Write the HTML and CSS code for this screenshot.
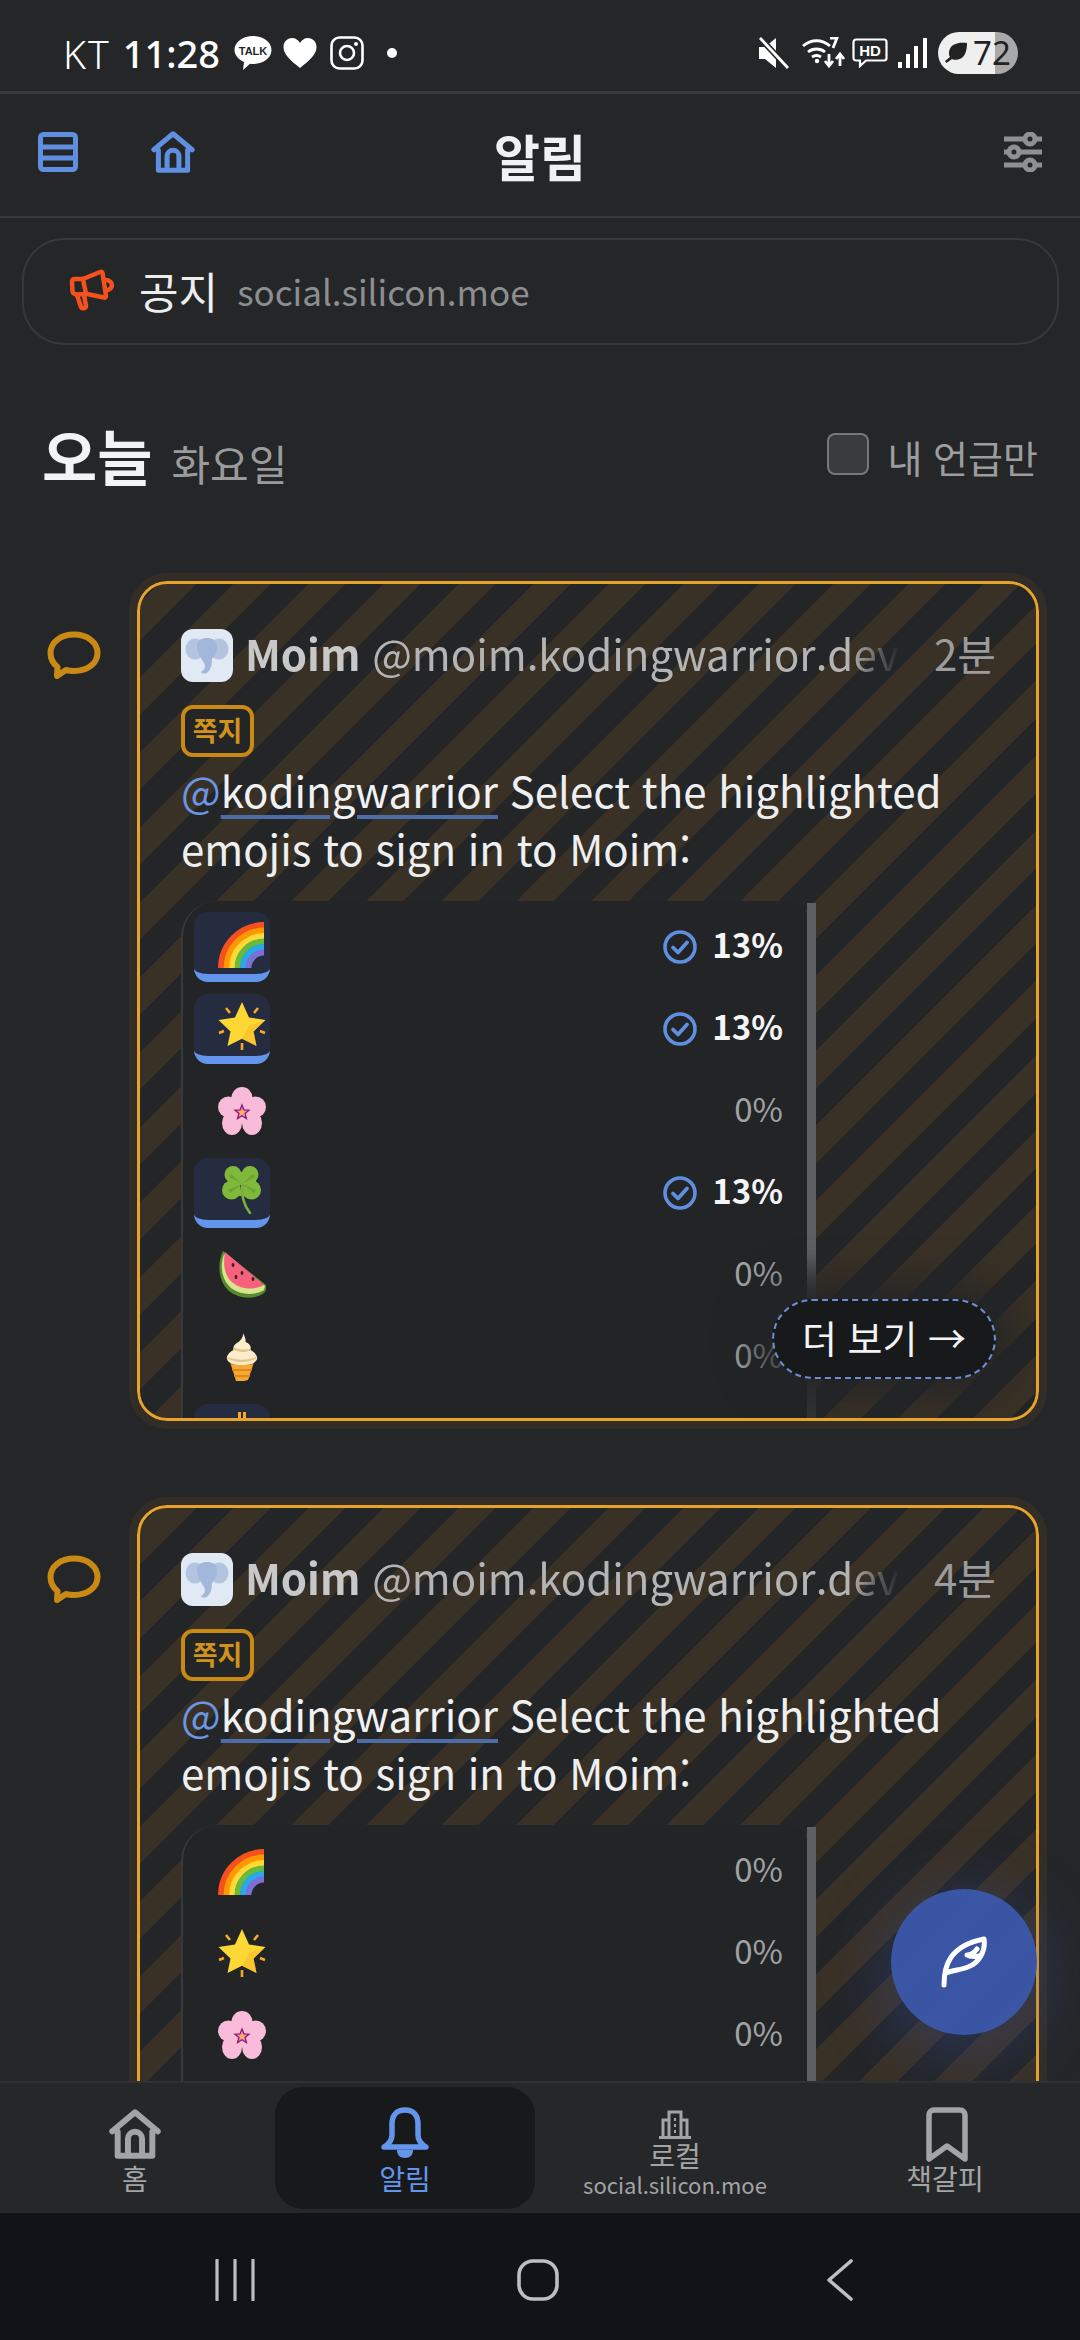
FILE: index.html
```html
<!DOCTYPE html>
<html lang="ko">
<head>
<meta charset="utf-8">
<title>알림</title>
<link rel="stylesheet" href="styles.css">
</head>
<body>
<svg class="defs" width="0" height="0" aria-hidden="true">
  <defs>
    <clipPath id="rb"><rect x="0" y="0" width="46" height="48"/></clipPath>
    <symbol id="e-rainbow" viewBox="0 0 48 48">
      <g fill="none" stroke-width="5.900" clip-path="url(#rb)">
        <path stroke="#f4511e" d="M3 48A43 43 0 0 1 46 5"/>
        <path stroke="#ff9800" d="M8.500 48A37.500 37.500 0 0 1 46 10.500"/>
        <path stroke="#ffd835" d="M14 48A32 32 0 0 1 46 16"/>
        <path stroke="#66bb3a" d="M19.500 48A26.500 26.500 0 0 1 46 21.500"/>
        <path stroke="#29a9e8" d="M25 48A21 21 0 0 1 46 27"/>
        <path stroke="#7e6fd6" d="M30.500 48A15.500 15.500 0 0 1 46 32.500"/>
      </g>
    </symbol>
    <symbol id="e-star" viewBox="0 0 48 48">
      <path fill="#fdd835" d="M24 0l7 15.600 16.500 2.400-12 11.600L38.500 44 24 36.800 9.500 44l3-14.400L.5 18l16.500-2.400z"/>
      <path fill="#f9b628" d="M24 36.800L38.500 44l-3-14.400 12-11.600L31 24z" opacity=".55"/>
      <g stroke="#f9a825" stroke-width="2.600" fill="none"><path d="M8 6l4 5M40 6l-4 5M1 31l5-2M47 31l-5-2M24 41v7"/></g>
    </symbol>
    <symbol id="e-flower" viewBox="0 0 48 48">
      <g fill="#f8bbd9">
        <ellipse cx="24" cy="11" rx="10.500" ry="11"/>
        <ellipse cx="10.500" cy="20" rx="10.500" ry="10.500"/>
        <ellipse cx="37.500" cy="20" rx="10.500" ry="10.500"/>
        <ellipse cx="14" cy="36" rx="10" ry="12"/>
        <ellipse cx="34" cy="36" rx="10" ry="12"/>
        <circle cx="24" cy="25" r="11"/>
      </g>
      <path fill="#f48fb1" stroke="#8e1a6b" stroke-width="1.300" d="M24 18l1.900 4.800 5.100.4-3.900 3.300 1.300 5-4.400-2.700-4.400 2.700 1.300-5-3.900-3.300 5.100-.4z"/>
      <circle cx="24" cy="25.500" r="2.200" fill="#ffb74d"/>
    </symbol>
    <symbol id="e-clover" viewBox="0 0 48 48">
      <g fill="#7fb93a">
        <circle cx="15" cy="8.500" r="8.500"/><circle cx="32" cy="8.500" r="8.500"/>
        <circle cx="13.500" cy="24" r="9.500"/><circle cx="33.500" cy="24" r="9.500"/>
        <path d="M24 18L8 6h32zM24 18L7 30h34zM10 8h28v16H10z"/>
      </g>
      <g fill="#5d9130" opacity=".55"><path d="M24 18L13 8l-2 3zM24 18l11-10 2 3zM24 18L12 27l-2-3zM24 18l12 9 2-3z"/></g>
      <path fill="none" stroke="#7cae3c" stroke-width="2.600" stroke-linecap="round" d="M24 18c0 12 1 20 8 29"/>
    </symbol>
    <symbol id="e-melon" viewBox="0 0 48 48">
      <path fill="#558b2f" d="M5 0C-1 12 0 30 11 40c10 8 26 9 35 2 3-3 2-6 2-8z"/>
      <path fill="#d8e58c" d="M6 3C2 14 3 28 13 37c9 7 24 8 33 2l1-4z"/>
      <path fill="#f8617e" d="M7 1C5 13 6 25 15 32c9 7 22 7 31 2z"/>
      <g fill="#30241f"><ellipse cx="15" cy="14" rx="1.400" ry="2"/><ellipse cx="24" cy="22" rx="1.400" ry="2"/><ellipse cx="35" cy="28" rx="1.400" ry="2"/><ellipse cx="18" cy="26" rx="1.400" ry="2"/></g>
    </symbol>
    <symbol id="e-icecream" viewBox="0 0 48 48">
      <path fill="#f7a533" d="M11 26h26l-6.500 20c-.5 2-6.500 2-7 2h-5c-.5 0-1 0-1-2z"/>
      <path fill="#d98a1e" d="M12.500 30h23l-.6 2H13.100zM14 36h20l-.6 2H14.600zM15.800 42h16.400l-.6 2H16.400z"/>
      <path fill="#fbeccb" d="M25 0c2 4 3 6 2.500 9 4 1.500 6 4 5 8 4 2 7.500 6 6.500 9-1 4-7 6-15 6s-14-2-15-6c-1-3 2.500-7 6.500-9-1-3.500 1.500-6.500 5-8 2.500-2 5-5 4.500-9z"/>
      <path fill="#e4c48a" d="M16 14c5 3 11 3 16 2l.5 1.500c-5 2-12 2-17-1zM10 24c8 3.500 20 3.500 28 0l.5 1.500c-8 4.500-21 4.500-29 0z"/>
    </symbol>
    <symbol id="i-check" viewBox="0 0 34 36">
      <circle cx="17" cy="18" r="15" fill="none" stroke="#5f8fe0" stroke-width="3.600"/>
      <path d="M10 18.500l5 5 9-10" fill="none" stroke="#5f8fe0" stroke-width="3.800" stroke-linecap="round" stroke-linejoin="round"/>
    </symbol>
    <symbol id="i-elephant" viewBox="0 0 52 52">
      <g fill="#b3c4e0">
        <ellipse cx="14" cy="20" rx="9.500" ry="10.500"/>
        <ellipse cx="38" cy="20" rx="9.500" ry="10.500"/>
      </g>
      <path fill="#a3b7da" d="M16 17c0-6 5-8 10-8s10 2 10 8-2 10-5 13c0 5-1 10-4 13-3 2-6 2-7 0 2-1 4-3 4-6 0-3-3-5-4-8-2-3-4-7-4-12z"/>
    </symbol>
    <symbol id="i-bubble" viewBox="0 0 54 48">
      <path fill="none" stroke="currentColor" stroke-width="6" stroke-linejoin="round" d="M27 3.500c13.500 0 23.500 8 23.500 18.500S40.500 40 27 40c-3 0-5.500-.3-8-1l-9 6 .5-9C6 32.500 3.500 27.500 3.500 22 3.500 11.500 13.500 3.500 27 3.500z"/>
    </symbol>
    <symbol id="i-home" viewBox="0 0 48 46">
      <path fill="none" stroke="currentColor" stroke-width="5.500" stroke-linecap="round" stroke-linejoin="round" d="M3 20.500L24 3l21 17.500M8 21v22h32V21M17.500 43V27.500a6.500 6.500 0 0 1 13 0V43"/>
    </symbol>
    <symbol id="e-sun" viewBox="0 0 48 48">
      <circle cx="24" cy="24" r="14" fill="#fbc02d"/><path fill="#f9a825" d="M20 0h3v10h-3zM25 0h3v10h-3z"/>
    </symbol>
  </defs>
</svg>

<div class="phone">
  <div class="status">
    <div class="status-left">
      <span class="carrier">KT</span><span class="clock">11:28</span>
      <svg class="st-talk" viewBox="0 0 38 36"><path fill="#fff" d="M19 1c10 0 18.500 6 18.500 14S29 29 19 29c-1 0-2 0-3-.2L9 35l1-8C4.500 24.500.500 20 .500 15 .500 7 9 1 19 1z"/><text class="talk-text" x="19" y="19.500" text-anchor="middle">TALK</text></svg>
      <svg class="st-heart" viewBox="0 0 34 32"><path fill="#fff" d="M17 31C7 23 .5 17.500.5 10 .5 4.500 4.500 1 9 1c3.500 0 6.500 2 8 5 1.500-3 4.500-5 8-5 4.500 0 8.500 3.500 8.500 9 0 7.500-6.500 13-16.500 21z"/></svg>
      <svg class="st-insta" viewBox="0 0 34 34"><rect x="1.500" y="1.500" width="31" height="31" rx="8" fill="none" stroke="#fff" stroke-width="2.600"/><circle cx="17" cy="17" r="7" fill="none" stroke="#fff" stroke-width="2.600"/><circle cx="26" cy="8" r="2" fill="#fff"/></svg>
      <span class="st-dot"></span>
    </div>
    <div class="status-right">
      <svg class="st-mute" viewBox="0 0 32 32"><path fill="#fff" d="M1 10h6L18 1v30L7 22H1z"/><path d="M3 2l27 29" stroke="#252628" stroke-width="6"/><path d="M2 1l28 30" stroke="#fff" stroke-width="2.800"/></svg>
      <svg class="st-wifi" viewBox="0 0 44 32"><g fill="none" stroke="#fff" stroke-width="2.800"><path d="M1 9c8-7 19-7 27 0M6 15c5-4 12-4 17 0M10 20c3-2 6-2 9 0"/><path d="M28 1h7l-4 10M27 17v11M23 24l4 5 4-5M38 29V18M34 22l4-5 4 5"/></g><circle cx="15" cy="24" r="2.200" fill="#fff"/></svg>
      <svg class="st-hd" viewBox="0 0 36 30"><path fill="none" stroke="#fff" stroke-width="2.200" d="M4 1.500h28a2.500 2.500 0 0 1 2.500 2.500v16a2.500 2.500 0 0 1-2.500 2.500H14L8 28v-5.500H4A2.500 2.500 0 0 1 1.500 20V4A2.500 2.500 0 0 1 4 1.500z"/><text class="hd-text" x="18" y="18" text-anchor="middle">HD</text></svg>
      <svg class="st-signal" viewBox="0 0 29 30"><path fill="#fff" d="M0 24h4v6H0zM8 16h4v14H8zM16 8h4v22h-4zM25 0h4v30h-4z"/></svg>
      <div class="battery">
        <svg class="st-leaf" viewBox="0 0 24 22"><path fill="#222" d="M23 1c-9-1-17 1-18 9-.2 2 .2 4 1 5l-5 4 1.500 2L8 17c2 1 4 1 6 .5C21 16 23 9 23 1z"/></svg>
        <span class="batt-num">72</span>
      </div>
    </div>
  </div>

  <header class="top">
    <div class="top-left">
      <svg class="ic-list" viewBox="0 0 40 40"><rect x="2.500" y="2.500" width="35" height="35" rx="3" fill="none" stroke="currentColor" stroke-width="5"/><path d="M2 15h36M2 26h36" stroke="currentColor" stroke-width="5"/></svg>
      <svg class="ic-home-top"><use href="#i-home"/></svg>
    </div>
    <h1 class="top-title">알림</h1>
    <div class="top-right">
      <svg class="ic-slider" viewBox="0 0 38 40"><g stroke="currentColor" stroke-width="5" fill="#252628"><path d="M0 7h38M0 20h38M0 33h38" fill="none"/><circle cx="26" cy="7" r="5"/><circle cx="10" cy="20" r="5"/><circle cx="26" cy="33" r="5"/></g></svg>
    </div>
  </header>

  <main class="main">
    <div class="notice">
      <svg class="ic-mega" viewBox="0 0 46 42"><g fill="none" stroke="#f4511e" stroke-width="4.500" stroke-linejoin="round" stroke-linecap="round"><path d="M3 13c0-2 1-3 3-3h8L31 3c1-.5 2 0 2.500 1l3.500 23c0 1-1 2-2 1.500L18 25l-11 .5C5 25 3.500 24 3.500 22z"/><path d="M14 10l3 15M37 11c4 .5 6 3 6 5s-1.500 4-4 5M8 26l4 12c.5 2 5 1.500 5-1l-2-11"/></g></svg>
      <span class="notice-label">공지</span>
      <span class="notice-host">social.silicon.moe</span>
    </div>

    <div class="day">
      <div class="day-left"><span class="day-today">오늘</span><span class="day-name">화요일</span></div>
      <label class="mention-only"><span class="check-box"></span><span class="mention-text">내 언급만</span></label>
    </div>

    <article class="item">
      <svg class="item-icon"><use href="#i-bubble"/></svg>
      <div class="card">
        <div class="card-head">
          <span class="avatar"><svg class="avatar-svg"><use href="#i-elephant"/></svg></span>
          <span class="who"><b class="who-name">Moim</b> @moim.kodingwarrior.dev</span>
          <span class="when">2분</span>
        </div>
        <span class="tag">쪽지</span>
        <p class="body"><span class="at">@</span><span class="mention">kodingwarrior</span> Select the highlighted emojis to sign in to Moim:</p>
        <div class="poll">
          <div class="row on"><span class="cell"><svg class="emoji"><use href="#e-rainbow"/></svg></span><span class="pct"><svg class="check"><use href="#i-check"/></svg>13%</span></div>
          <div class="row on"><span class="cell"><svg class="emoji"><use href="#e-star"/></svg></span><span class="pct"><svg class="check"><use href="#i-check"/></svg>13%</span></div>
          <div class="row"><span class="cell"><svg class="emoji"><use href="#e-flower"/></svg></span><span class="pct">0%</span></div>
          <div class="row on"><span class="cell"><svg class="emoji"><use href="#e-clover"/></svg></span><span class="pct"><svg class="check"><use href="#i-check"/></svg>13%</span></div>
          <div class="row"><span class="cell"><svg class="emoji"><use href="#e-melon"/></svg></span><span class="pct">0%</span></div>
          <div class="row"><span class="cell"><svg class="emoji"><use href="#e-icecream"/></svg></span><span class="pct">0%</span></div>
          <div class="row on"><span class="cell"><svg class="emoji"><use href="#e-sun"/></svg></span><span class="pct"><svg class="check"><use href="#i-check"/></svg>13%</span></div>
        </div>
        <span class="more">더 보기 →</span>
      </div>
    </article>

    <article class="item">
      <svg class="item-icon"><use href="#i-bubble"/></svg>
      <div class="card">
        <div class="card-head">
          <span class="avatar"><svg class="avatar-svg"><use href="#i-elephant"/></svg></span>
          <span class="who"><b class="who-name">Moim</b> @moim.kodingwarrior.dev</span>
          <span class="when">4분</span>
        </div>
        <span class="tag">쪽지</span>
        <p class="body"><span class="at">@</span><span class="mention">kodingwarrior</span> Select the highlighted emojis to sign in to Moim:</p>
        <div class="poll poll-plain">
          <div class="row"><span class="cell"><svg class="emoji"><use href="#e-rainbow"/></svg></span><span class="pct">0%</span></div>
          <div class="row"><span class="cell"><svg class="emoji"><use href="#e-star"/></svg></span><span class="pct">0%</span></div>
          <div class="row"><span class="cell"><svg class="emoji"><use href="#e-flower"/></svg></span><span class="pct">0%</span></div>
          <div class="row"><span class="cell"><svg class="emoji"><use href="#e-clover"/></svg></span><span class="pct">0%</span></div>
        </div>
      </div>
    </article>
  </main>

  <button class="fab" type="button" aria-label="글쓰기">
    <svg class="ic-feather" viewBox="0 0 46 52"><path fill="none" stroke="#fff" stroke-width="5" stroke-linecap="round" stroke-linejoin="round" d="M3 49C3 30 8 10 43 3c2 12-5 24-16 28-7 3-15 3-22 6M36 13c-3 4-6 6-10 6 3 2 7 2 12 1"/></svg>
  </button>

  <nav class="tabs">
    <a class="tab"><svg class="tab-home"><use href="#i-home"/></svg><span class="tab-label">홈</span></a>
    <a class="tab active">
      <svg class="tab-bell" viewBox="0 0 48 52"><path fill="none" stroke="currentColor" stroke-width="5.500" stroke-linejoin="round" d="M24 3c9 0 13 6 13 14v11c0 5 3 9 8 12H3c5-3 8-7 8-12V17C11 9 15 3 24 3z"/><path fill="currentColor" d="M16 43h16c0 5-3 8-8 8s-8-3-8-8z"/></svg>
      <span class="tab-label">알림</span>
    </a>
    <a class="tab local">
      <svg class="tab-build" viewBox="0 0 32 30"><g fill="none" stroke="currentColor" stroke-width="3"><path d="M0 28.500h32M10 28V3h12v25M10 11H4v17M22 11h6v17"/></g><path d="M15 9h2v3h-2zM15 15h2v3h-2zM15 21h2v3h-2z" fill="currentColor"/></svg>
      <span class="local-kr">로컬</span>
      <span class="local-host">social.silicon.moe</span>
    </a>
    <a class="tab">
      <svg class="tab-mark" viewBox="0 0 42 56"><path fill="none" stroke="currentColor" stroke-width="5.500" stroke-linejoin="round" d="M8 3h26a5 5 0 0 1 5 5v44L21 39 3 52V8a5 5 0 0 1 5-5z"/></svg>
      <span class="tab-label">책갈피</span>
    </a>
  </nav>

  <div class="sysnav">
    <svg class="sys-bars" viewBox="0 0 40 42"><path d="M2 1v40M20 1v40M38 1v40" stroke="currentColor" stroke-width="3.200" stroke-linecap="round"/></svg>
    <svg class="sys-home" viewBox="0 0 42 42"><rect x="2" y="2" width="38" height="38" rx="14" fill="none" stroke="currentColor" stroke-width="3.600"/></svg>
    <svg class="sys-back" viewBox="0 0 28 42"><path d="M25 2L3 21l22 19" fill="none" stroke="currentColor" stroke-width="3.600" stroke-linecap="round" stroke-linejoin="round"/></svg>
  </div>
</div>
</body>
</html>
```

FILE: styles.css
```css
* { box-sizing: border-box; }
html, body { margin: 0; padding: 0; background: #252628; }
body { font-family: "Noto Sans CJK KR", "Noto Sans", sans-serif; color: #eee; }
.defs { position: absolute; }
.phone { position: relative; width: 1080px; height: 2340px; display: flex; flex-direction: column; overflow: hidden; background: #252628; }

/* status bar */
.status { flex: none; height: 94px; padding: 15px 62px 0 63px; display: flex; justify-content: space-between; align-items: center; border-bottom: 3px solid #3a3b3d; font-family: "Noto Sans", sans-serif; color: #fff; }
.status-left, .status-right { display: flex; align-items: center; }
.carrier { font-size: 39px; font-weight: 300; letter-spacing: 2px; margin-right: 12px; }
.clock { font-size: 38px; font-weight: 500; margin-right: 14px; }
.st-talk { width: 38px; height: 36px; margin-right: 11px; }
.talk-text { font: 700 11px "Liberation Sans", sans-serif; fill: #252628; }
.st-heart { width: 34px; height: 32px; margin-right: 13px; }
.st-insta { width: 34px; height: 34px; margin-right: 23px; }
.st-dot { width: 10px; height: 10px; border-radius: 50%; background: #fff; }
.st-mute { width: 32px; height: 32px; margin-right: 12px; }
.st-wifi { width: 44px; height: 32px; margin-right: 6px; }
.hd-text { font: 700 15px "Liberation Sans", sans-serif; fill: #fff; }
.st-hd { width: 36px; height: 30px; margin-right: 10px; }
.st-signal { width: 29px; height: 30px; margin-right: 11px; }
.battery { width: 80px; height: 42px; border-radius: 21px; display: flex; align-items: center; padding-left: 6px; background: linear-gradient(90deg, #efefef 0 57px, #a9a9a9 57px); color: #222; }
.st-leaf { width: 24px; height: 22px; margin-right: 5px; }
.batt-num { font-size: 33px; line-height: 42px; font-weight: 400; }

/* header */
.top { flex: none; height: 124px; display: grid; grid-template-columns: 1fr auto 1fr; align-items: center; padding: 0 38px; border-bottom: 2px solid #38393b; }
.top-left { display: flex; align-items: center; gap: 73px; padding-bottom: 6px; color: #5f8fe0; }
.ic-list { width: 40px; height: 40px; }
.ic-home-top { width: 44px; height: 42px; }
.top-title { margin: 0; font-size: 50px; line-height: 60px; font-weight: 700; color: #f0f1f3; }
.top-right { display: flex; justify-content: flex-end; padding-bottom: 6px; color: #8f9092; }
.ic-slider { width: 38px; height: 40px; }

/* main */
.main { flex: 1; min-height: 0; overflow: hidden; }
.notice { margin: 20px 21px 0 22px; height: 107px; border: 2px solid #37383b; border-radius: 42px; display: flex; align-items: center; padding: 0 0 3px 45px; }
.ic-mega { width: 46px; height: 42px; margin-right: 24px; }
.notice-label { font-size: 43px; color: #eceded; margin-right: 19px; }
.notice-host { font-size: 35px; color: #8d8e90; }
.day { height: 236px; padding: 0 42px 18px; display: flex; justify-content: space-between; align-items: center; }
.day-left { display: flex; align-items: baseline; gap: 19px; }
.day-today { font-size: 60px; font-weight: 700; color: #f2f3f5; }
.day-name { font-size: 42px; line-height: 56px; margin-top: -3px; color: #9a9b9d; }
.mention-only { display: flex; align-items: center; gap: 19px; }
.check-box { width: 42px; height: 42px; border: 2px solid #77787a; border-radius: 8px; background: #3a3b3d; }
.mention-text { font-size: 38px; padding-top: 5px; color: #9c9d9f; }

.item { display: flex; align-items: flex-start; padding: 0 41px 0 47px; margin-bottom: 84px; }
.item-icon { flex: none; width: 54px; height: 48px; margin: 50px 36px 0 0; color: #c98a15; }
.card { position: relative; flex: 1; height: 840px; overflow: hidden; padding: 44px 40px 0 41px; border: 3px solid #e8a32a; border-radius: 30px; outline: 8px solid #322e27; background: repeating-linear-gradient(135deg, #232527 -13.4px 13.1px, #3a3126 13.1px 39.6px); }
.card-head { display: flex; align-items: center; height: 54px; }
.avatar { flex: none; width: 52px; height: 53px; border-radius: 12px; background: #e0e9f4; margin-right: 12px; }
.avatar-svg { display: block; width: 52px; height: 52px; }
.who { flex: 1; min-width: 0; white-space: nowrap; overflow: hidden; font-size: 42px; line-height: 50px; padding-bottom: 4px; color: #b4b4b4; -webkit-mask-image: linear-gradient(90deg, #000 92%, transparent 100%); mask-image: linear-gradient(90deg, #000 92%, transparent 100%); }
.who-name { font-weight: 700; color: #c8c8c8; }
.when { flex: none; margin-left: 34px; padding-bottom: 6px; font-size: 42px; color: #9c9c9c; }
.tag { display: inline-block; margin-top: 23px; width: 73px; height: 52px; border: 4px solid #c98a15; border-radius: 12px; background: #232527; font-size: 27px; line-height: 42px; font-weight: 700; text-align: center; color: #d2931c; }
.body { margin: 4px 0 0; font-size: 42px; line-height: 58px; color: #eeeff1; }
.at { color: #6a96e4; }
.mention { color: #f0f1f3; text-decoration: underline; text-decoration-color: #4c6da8; text-decoration-thickness: 4px; text-underline-offset: 7px; }
.poll { margin: 24px 0 0; width: 635px; height: 700px; padding: 11px 33px 0 11px; border-left: 2px solid #38393b; border-radius: 36px 36px 0 0; background: #222426; position: relative; display: flex; flex-direction: column; gap: 12px; }
.poll::after { content: ""; position: absolute; right: 0; top: 2px; width: 9px; height: 100%; background: linear-gradient(180deg, #5e5f61 0 350px, #333436 400px); }
.poll-plain::after { background: #5e5f61; }
.row { flex: none; height: 70px; display: flex; justify-content: space-between; align-items: center; }
.cell { flex: none; width: 76px; height: 70px; padding: 0 0 0 24px; display: flex; align-items: center; border-radius: 14px; }
.on .cell { background: #262c40; border-bottom: 8px solid #6495ed; padding-top: 2px; }
.emoji { display: block; width: 48px; height: 48px; }
.pct { font-size: 33px; padding-bottom: 6px; color: #a0a1a3; display: flex; align-items: center; }
.on .pct { font-weight: 700; color: #f4f5f7; }
.check { width: 34px; height: 36px; margin: 6px 15px 0 0; }
.more { position: absolute; right: 40px; bottom: 39px; z-index: 2; width: 224px; height: 80px; border: 2.500px dashed #6a90d2; border-radius: 40px; background: #18191b; box-shadow: 0 0 36px 20px rgba(35, 37, 39, .85); font-size: 38px; line-height: 72px; text-align: center; color: #f2f3f5; }

/* floating action button */
.fab { position: absolute; left: 891px; top: 1889px; z-index: 3; width: 146px; height: 146px; padding: 0; border: 0; border-radius: 50%; background: rgba(60, 88, 172, .94); box-shadow: 0 12px 60px 14px rgba(55, 80, 160, .32); display: flex; align-items: center; justify-content: center; }
.ic-feather { width: 46px; height: 52px; }

/* tab bar */
.tabs { flex: none; position: relative; z-index: 4; height: 132px; display: grid; grid-template-columns: repeat(4, 1fr); padding: 4px 0 4px; background: #262729; border-top: 2px solid #303133; color: #a3a4a6; }
.tab { display: flex; flex-direction: column; align-items: center; justify-content: flex-end; padding-bottom: 12px; }
.tab.active { margin: 0 5px 0 5px; border-radius: 28px; background: #18191b; color: #6495ed; }
.tab-home { display: block; width: 52px; height: 50px; }
.tab-bell { display: block; width: 48px; height: 52px; }
.tab-build { display: block; width: 32px; height: 30px; }
.tab-mark { display: block; width: 42px; height: 56px; margin: 0 0 -4px 3px; }
.tab-label { font-size: 28px; line-height: 38px; }
.local-kr { font-size: 28px; line-height: 32px; }
.local-host { font-size: 22px; line-height: 26px; }

/* system nav */
.sysnav { flex: none; height: 127px; background: #111318; color: #bdbec0; display: flex; align-items: center; padding: 7px 226px 0 215px; justify-content: space-between; }
.sys-bars { width: 40px; height: 42px; }
.sys-home { width: 42px; height: 42px; margin-left: -6px; }
.sys-back { width: 28px; height: 42px; }
```
